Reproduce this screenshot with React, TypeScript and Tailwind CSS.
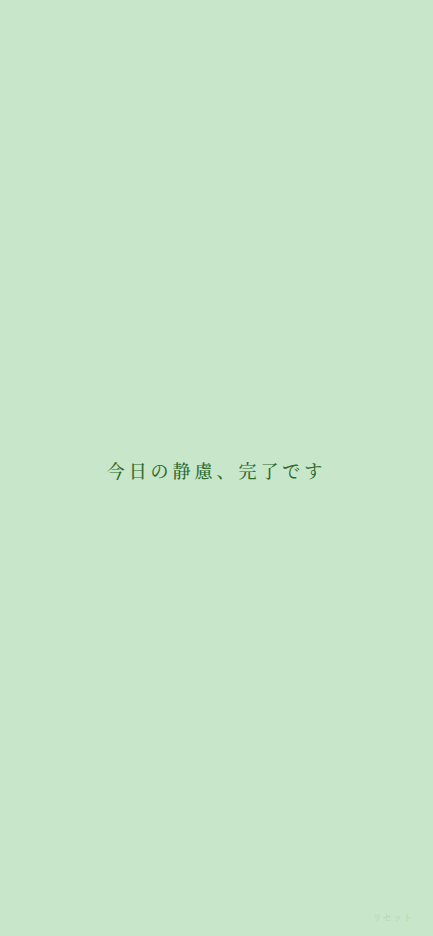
export default function App() {
  return (
    <div className="relative flex h-[936px] w-full flex-col items-center justify-center bg-[#c8e6c9] pt-[4px]" style={{ fontFamily: '"Noto Serif CJK JP", "Noto Sans CJK JP", serif' }}>
      <p className="text-[18px] font-medium tracking-[0.22em] text-[#2e6b30]">今日の静慮、完了です</p>
      <button className="absolute bottom-[12px] right-[20px] text-[9px] tracking-[0.12em] text-[#2e7d32]/20">リセット</button>
    </div>
  );
}
